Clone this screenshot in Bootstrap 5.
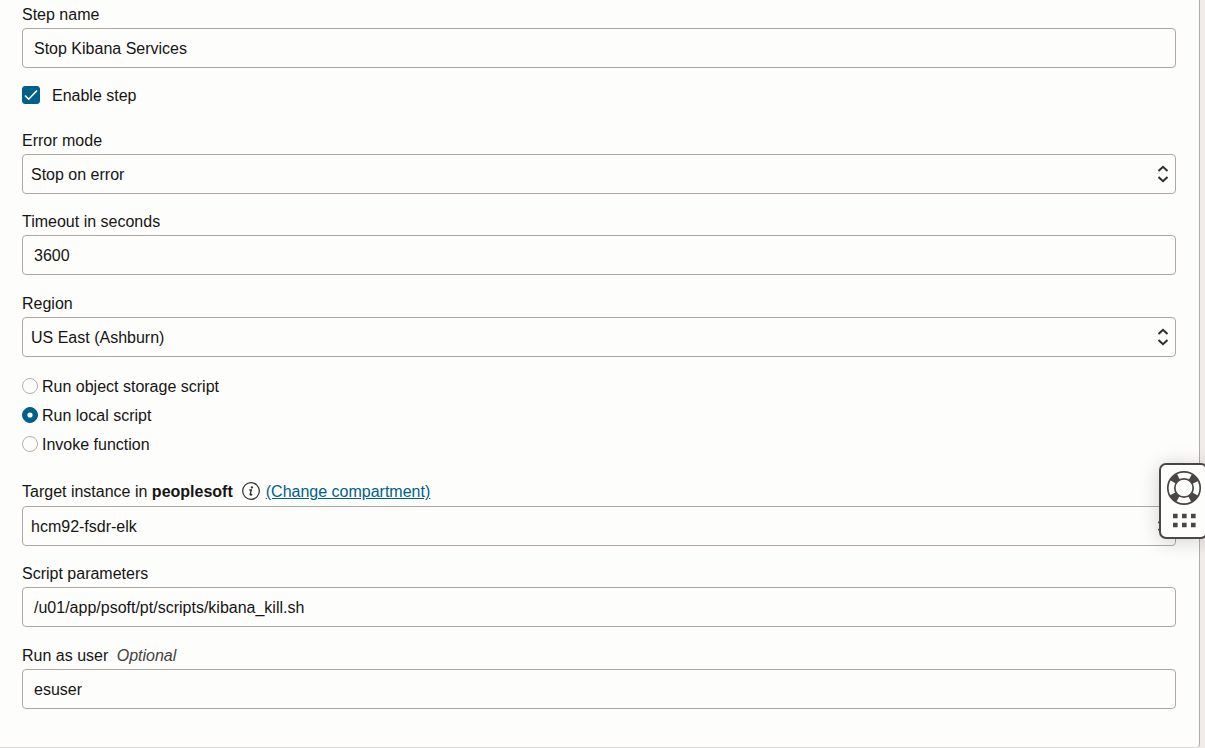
<!DOCTYPE html>
<html lang="en">
<head>
<meta charset="utf-8">
<meta name="viewport" content="width=device-width, initial-scale=1">
<title>Edit step</title>
<link href="https://cdn.jsdelivr.net/npm/bootstrap@5.3.0/dist/css/bootstrap.min.css" rel="stylesheet">
<style>
  body { background: #f1ecea; color: #161513; font: 16px/20px "Liberation Sans", Arial, sans-serif; overflow-x: hidden; }
  .step-panel { background: #fdfdfc; border: solid #b2aca8; border-width: 0 1px 1px 0; border-bottom-color: #dedad7; border-radius: 0 0 4px 0; margin-right: 5px; padding: 5px 23px 0 22px; min-height: 100vh; }
  .form-label { margin-bottom: 3px; }
  .field { margin-bottom: 18px; }
  .field-text { margin-bottom: 19px; }
  .form-control, .form-select { height: 40px; color: #161513; background-color: #fdfdfc; border: 1px solid #b0a8a1; border-radius: 4px; font-size: 16px; line-height: 20px; }
  .form-control { padding: 10px 11px 8px; }
  .form-select { padding: 10px 32px 8px 8px; background-position: right 6px center; background-size: 12px 18px;
    background-image: url("data:image/svg+xml,%3Csvg xmlns='http://www.w3.org/2000/svg' viewBox='0 0 12 18'%3E%3Cpath d='M1.5 6 6 1.8 10.5 6M1.5 12 6 16.2 10.5 12' fill='none' stroke='%23302e2c' stroke-width='2'/%3E%3C/svg%3E"); }
  .form-check-input { margin: 0; flex-shrink: 0; float: none; background-color: #fdfdfc; border-color: #b5afab; }
  .form-check-input[type=checkbox] { width: 18px; height: 18px; border-radius: 3px; }
  .form-check-input[type=radio] { width: 16px; height: 16px; }
  .form-check-input:checked { background-color: #00608a; border-color: #00608a; }
  .form-check-input:checked[type=checkbox] { background-size: 16px 16px; background-image: url("data:image/svg+xml,%3Csvg xmlns='http://www.w3.org/2000/svg' viewBox='0 0 16 16'%3E%3Cpath d='m2 8.5 3.7 3.7L14 3.5' fill='none' stroke='%23fff' stroke-width='1.6'/%3E%3C/svg%3E"); }
  .form-check-input:checked[type=radio] { background-size: 14px 14px; background-image: url("data:image/svg+xml,%3Csvg xmlns='http://www.w3.org/2000/svg' viewBox='0 0 14 14'%3E%3Ccircle cx='7' cy='7' r='2.6' fill='%23fff'/%3E%3C/svg%3E"); }
  .form-check-label { padding-top: 2px; }
  .enable-row { gap: 12px; margin-bottom: 25px; }
  .script-kinds { gap: 7px; margin: 18px 0 27px; }
  .script-kinds .form-check-label { margin-left: 4px; }
  .change-link { color: #00608a; }
  .info-btn { margin: 0 6px 0 9px; }
  .optional { color: #45423f; margin-left: 4px; }
  .help-tab { right: -3px; top: 463px; width: 49px; height: 76px; padding: 5px 0 0 5px; background: #fdfdfc; color: #4b4643; border: 2px solid #4b4643; border-radius: 7px; box-shadow: 0 2px 20px rgba(0, 0, 0, .18); }
</style>
</head>
<body>
<main class="step-panel">
  <form>
    <div class="mb-3">
      <label class="form-label d-block" for="name">Step name</label>
      <input class="form-control" id="name" type="text" value="Stop Kibana Services">
    </div>
    <div class="enable-row d-flex align-items-center">
      <input class="form-check-input" id="enable" type="checkbox" checked>
      <label class="form-check-label" for="enable">Enable step</label>
    </div>
    <div class="field">
      <label class="form-label d-block" for="mode">Error mode</label>
      <select class="form-select" id="mode"><option>Stop on error</option></select>
    </div>
    <div class="field-text">
      <label class="form-label d-block" for="timeout">Timeout in seconds</label>
      <input class="form-control" id="timeout" type="text" inputmode="numeric" value="3600">
    </div>
    <div class="field">
      <label class="form-label d-block" for="region">Region</label>
      <select class="form-select" id="region"><option>US East (Ashburn)</option></select>
    </div>
    <div class="script-kinds d-flex flex-column" role="radiogroup" aria-label="Script type">
      <div class="d-flex align-items-center">
        <input class="form-check-input" type="radio" name="kind" id="kind-object">
        <label class="form-check-label" for="kind-object">Run object storage script</label>
      </div>
      <div class="d-flex align-items-center">
        <input class="form-check-input" type="radio" name="kind" id="kind-local" checked>
        <label class="form-check-label" for="kind-local">Run local script</label>
      </div>
      <div class="d-flex align-items-center">
        <input class="form-check-input" type="radio" name="kind" id="kind-function">
        <label class="form-check-label" for="kind-function">Invoke function</label>
      </div>
    </div>
    <div class="field">
      <div class="form-label mb-1 d-flex align-items-start">
        <label for="target">Target instance in <b>peoplesoft</b></label>
        <button class="info-btn btn p-0 border-0 d-flex" type="button" aria-label="Information">
          <svg width="18" height="18" viewBox="0 0 18 18" fill="none" stroke="#302e2c"><circle cx="9" cy="9" r="8.3" stroke-width="1.2"/><circle cx="9.9" cy="5.4" r="1.1" fill="#302e2c" stroke="none"/><path d="M7.3 8h2l-1 4.2q-.2 1 .6.8l1.3-.6" stroke-width="1.4"/></svg>
        </button>
        <a class="change-link" href="#">(Change compartment)</a>
      </div>
      <select class="form-select" id="target"><option>hcm92-fsdr-elk</option></select>
    </div>
    <div class="field-text">
      <label class="form-label d-block" for="params">Script parameters</label>
      <input class="form-control" id="params" type="text" value="/u01/app/psoft/pt/scripts/kibana_kill.sh">
    </div>
    <div class="field">
      <label class="form-label d-block" for="user">Run as user <i class="optional">Optional</i></label>
      <input class="form-control" id="user" type="text" value="esuser">
    </div>
  </form>
</main>
<button class="help-tab position-fixed d-flex flex-column align-items-start" type="button" aria-label="Help">
  <svg width="36" height="66" viewBox="0 0 36 66" fill="none" stroke="currentColor">
    <circle cx="18" cy="18" r="12.6" stroke-width="7.4" stroke-dasharray="7.4 12.392" stroke-dashoffset="-6.196"/>
    <circle cx="18" cy="18" r="16.2" stroke-width="1.7"/>
    <circle cx="18" cy="18" r="9.2" stroke-width="1.7"/>
    <path d="M7 46h4.6M16 46h4.6M25 46h4.6M7 55h4.6M16 55h4.6M25 55h4.6" stroke-width="4.6"/>
  </svg>
</button>
<script src="https://cdn.jsdelivr.net/npm/bootstrap@5.3.0/dist/js/bootstrap.bundle.min.js"></script>
</body>
</html>
